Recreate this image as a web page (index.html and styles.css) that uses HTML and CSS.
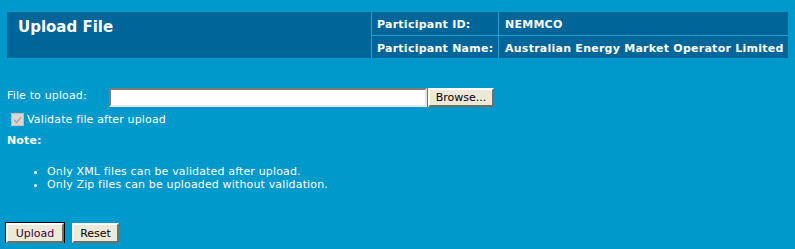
FILE: index.html
```html
<!DOCTYPE html>
<html lang="en">
<head>
  <meta charset="UTF-8">
  <title>Upload File</title>
  <link rel="stylesheet" href="styles.css">
</head>
<body>
  <div class="header">
    <div class="header-title">Upload File</div>
    <div class="header-label">Participant ID:</div>
    <div class="header-value">NEMMCO</div>
    <div class="header-label">Participant Name:</div>
    <div class="header-value">Australian Energy Market Operator Limited</div>
  </div>

  <form class="upload-form">
    <div class="file-row">
      <label class="file-label">File to upload:</label>
      <input type="text" class="file-input">
      <button type="button" class="btn btn-browse">Browse...</button>
    </div>

    <div class="validate-row">
      <span class="check">
        <svg width="9" height="9" viewBox="0 0 9 9"><path d="M1 4 L3.5 6.5 L8 1.5 L8 3.5 L3.5 8.5 L1 6 Z" fill="#a4a39a"/></svg>
      </span>
      <span>Validate file after upload</span>
    </div>

    <div class="note-title">Note:</div>
    <ul class="note-list">
      <li>Only XML files can be validated after upload.</li>
      <li>Only Zip files can be uploaded without validation.</li>
    </ul>

    <div class="actions">
      <button type="button" class="btn btn-default">Upload</button>
      <button type="button" class="btn btn-reset">Reset</button>
    </div>
  </form>
</body>
</html>
```

FILE: styles.css
```css
:root {
  --page-bg: #0099cc;
  --header-bg: #006699;
  --btn-bg: #ece9d8;
}

* {
  margin: 0;
  padding: 0;
  box-sizing: border-box;
}

body {
  font-family: "DejaVu Sans", Verdana, sans-serif;
  font-size: 11px;
  letter-spacing: 0.15px;
  color: #fff;
  background-color: var(--page-bg);
  padding-top: 12px;
}

.header {
  display: grid;
  grid-template-columns: 364px 126px 1fr;
  grid-template-rows: 23px 22px;
  gap: 1px;
  margin: 0 7px;
  background-color: #1aa0cf;
  font-weight: bold;
  letter-spacing: 0.25px;
}

.header > div {
  background-color: var(--header-bg);
}

.header-title {
  grid-row: 1 / 3;
  font-size: 15px;
  letter-spacing: 0;
  padding: 6px 0 0 11px;
}

.header-label,
.header-value {
  padding: 6px 0 0 5px;
  white-space: nowrap;
}

.header-value {
  padding-left: 6px;
}

.upload-form {
  padding: 0 7px;
}

.file-row {
  display: flex;
  align-items: flex-start;
  margin-top: 30px;
}

.file-label {
  width: 102px;
  padding-top: 1px;
}

.file-input {
  width: 318px;
  height: 19px;
  border: 2px solid;
  border-color: #7f7c73 #e8e6dc #e8e6dc #7f7c73;
  background: #fff;
}

.btn {
  font-family: "DejaVu Sans", Verdana, sans-serif;
  font-size: 11px;
  color: #000;
  background-color: var(--btn-bg);
  border: 2px solid;
  border-color: #fff #716f64 #716f64 #fff;
  height: 20px;
  padding: 0;
}

.btn-browse {
  width: 66px;
  height: 19px;
  margin-left: 1px;
}

.validate-row {
  display: flex;
  align-items: center;
  gap: 3px;
  margin-top: 6px;
  margin-left: 4px;
}

.check {
  display: flex;
  align-items: center;
  justify-content: center;
  width: 13px;
  height: 13px;
  border: 1px solid #c0beb4;
  background-color: #d9d8d0;
}

.note-title {
  font-weight: bold;
  margin-top: 8px;
}

.note-list {
  margin-top: 18px;
  padding-left: 40px;
  line-height: 13px;
}

.actions {
  display: flex;
  gap: 8px;
  margin-top: 32px;
  margin-left: -1px;
}

.btn-default {
  width: 58px;
  outline: 1px solid #000;
  color: #3a0044;
}

.btn-reset {
  width: 47px;
}
```
